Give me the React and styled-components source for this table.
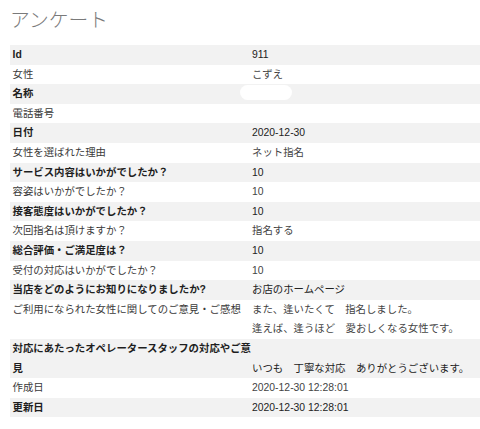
import React from "react";
import styled, { createGlobalStyle } from "styled-components";

const GlobalStyle = createGlobalStyle`
  html, body {
    margin: 0;
    padding: 0;
    background: #fff;
  }
  body {
    font-family: "Liberation Sans", Arial, "Noto Sans CJK JP", sans-serif;
    color: #333;
  }
`;

const ROWS = [
  { label: "Id", value: "911" },
  { label: "女性", value: "こずえ" },
  { label: "名称", value: "", hidden: true },
  { label: "電話番号", value: "" },
  { label: "日付", value: "2020-12-30" },
  { label: "女性を選ばれた理由", value: "ネット指名" },
  { label: "サービス内容はいかがでしたか？", value: "10" },
  { label: "容姿はいかがでしたか？", value: "10" },
  { label: "接客態度はいかがでしたか？", value: "10" },
  { label: "次回指名は頂けますか？", value: "指名する" },
  { label: "総合評価・ご満足度は？", value: "10" },
  { label: "受付の対応はいかがでしたか？", value: "10" },
  { label: "当店をどのようにお知りになりましたか?", value: "お店のホームページ" },
  {
    label: "ご利用になられた女性に関してのご意見・ご感想",
    value: "また、逢いたくて　指名しました。\n逢えば、逢うほど　愛おしくなる女性です。",
  },
  {
    label: "対応にあたったオペレータースタッフの対応やご意見",
    value: "\nいつも　丁寧な対応　ありがとうございます。",
  },
  { label: "作成日", value: "2020-12-30 12:28:01" },
  { label: "更新日", value: "2020-12-30 12:28:01" },
];

const Page = styled.div`
  padding: 8px 0 10px 10px;
`;

const Title = styled.h1`
  margin: 0 0 16px;
  font-family: "Noto Sans CJK JP", sans-serif;
  font-size: 19.8px;
  line-height: 21px;
  font-weight: 300;
  color: #7a7a7a;
`;

const Table = styled.div`
  display: flex;
  flex-direction: column;
  font-size: 10.4px;
`;

const Row = styled.div`
  display: grid;
  grid-template-columns: 242px 1fr;
  line-height: 19.6px;
  background: ${props => (props.$striped ? "#f2f2f2" : "transparent")};
`;

const Label = styled.div`
  padding-left: 2.5px;
  font-weight: ${props => (props.$striped ? 700 : 400)};
  color: ${props => (props.$striped ? "#1e1e1e" : "#3a3a3a")};
  word-break: break-all;
`;

const Value = styled.div`
  white-space: pre-line;
  color: ${props => (props.$striped ? "#222" : "#444")};
`;

const Redacted = styled.span`
  display: block;
  width: 52px;
  height: 15.5px;
  margin: 0.5px 0 0 -12px;
  border-radius: 8px;
  background: #fff;
`;

const App = () => {
  return (
    <>
      <GlobalStyle />
      <Page>
        <Title>アンケート</Title>
        <Table>
          {ROWS.map((row, i) => {
            const striped = i % 2 === 0;
            return (
              <Row key={row.label} $striped={striped}>
                <Label $striped={striped}>{row.label}</Label>
                <Value $striped={striped}>
                  {row.hidden ? <Redacted /> : row.value}
                </Value>
              </Row>
            );
          })}
        </Table>
      </Page>
    </>
  );
};

export default App;
